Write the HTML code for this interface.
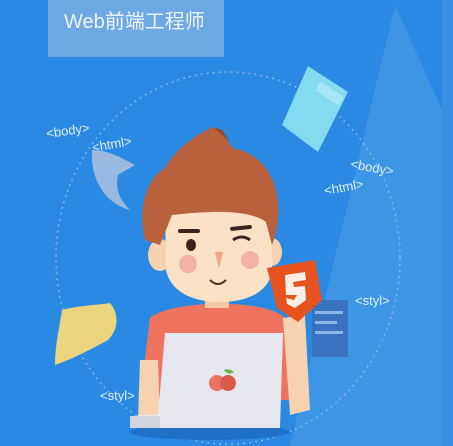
<!DOCTYPE html>
<html><head><meta charset="utf-8"><style>
html,body{margin:0;padding:0;background:#2a89e2;}
svg{display:block}
</style></head><body>
<svg width="453" height="446" viewBox="0 0 453 446" xmlns="http://www.w3.org/2000/svg">
<rect width="453" height="446" fill="#2a89e2"/>
<polygon points="395,5 442,110 442,446 290,446" fill="#3d95e6"/>
<rect x="442" y="0" width="11" height="446" fill="#3890e4"/>
<rect x="48" y="0" width="176" height="57" fill="#6ea8e2"/>
<text x="64" y="28" font-family="'Liberation Sans','Noto Sans CJK SC',sans-serif" font-size="20" fill="#eef5fb">Web前端工程师</text>
<ellipse cx="228" cy="258" rx="172" ry="186" fill="none" stroke="#7fb8ee" stroke-width="1.5" stroke-dasharray="2,4"/>
<polygon points="308,66 348,92 318,152 282,125" fill="#84dbef"/>
<rect x="305" y="85" width="28" height="10" fill="#a7e7f5" transform="rotate(33 318 110)"/>
<path d="M92,150 C110,150 125,160 135,165 L118,175 C115,190 120,200 130,210 C110,205 90,185 92,150Z" fill="#9ab9e0"/>
<g font-family="'Liberation Sans',sans-serif" font-size="13" fill="#dff0fb">
<text x="47" y="138" transform="rotate(-8 47 138)">&lt;body&gt;</text>
<text x="93" y="152" transform="rotate(-10 93 152)">&lt;html&gt;</text>
<text x="350" y="168" transform="rotate(10 350 168)">&lt;body&gt;</text>
<text x="325" y="195" transform="rotate(-10 325 195)">&lt;html&gt;</text>
<text x="355" y="305" >&lt;styl&gt;</text>
<text x="100" y="400">&lt;styl&gt;</text>
</g>
<path d="M62,310 C80,305 100,305 110,303 C120,315 118,330 108,340 C90,350 70,360 55,365 C55,345 60,325 62,310Z" fill="#ead47e"/>
<rect x="312" y="300" width="36" height="57" fill="#3a72c0"/>
<rect x="315" y="311" width="28" height="3" fill="#8cb6e6"/>
<rect x="315" y="321" width="22" height="3" fill="#8cb6e6"/>
<rect x="315" y="331" width="28" height="3" fill="#8cb6e6"/>
<ellipse cx="210" cy="432" rx="80" ry="8" fill="#2170c8"/>
<!-- shirt -->
<path d="M150,318 C170,300 265,298 285,318 L292,400 L140,400 Z" fill="#ef7460"/>
<path d="M140,360 L158,360 L160,420 L138,420 Z" fill="#f6d2b0"/>
<rect x="205" y="290" width="24" height="18" fill="#f3c8a4"/>
<path d="M283,318 L305,315 L310,410 L290,415 Z" fill="#f6d2b0"/>
<ellipse cx="160" cy="255" rx="12" ry="16" fill="#f6d2b0"/>
<ellipse cx="272" cy="252" rx="10" ry="14" fill="#f6d2b0"/>
<path d="M165,205 L272,200 L272,270 C270,290 250,302 220,302 C190,302 170,290 166,270 Z" fill="#fbe1c6"/>
<!-- hair -->
<path d="M145,240 C138,210 145,180 165,168 C175,150 195,135 213,127 C222,132 228,140 232,148 C255,152 272,168 277,195 C280,215 277,232 272,245 L266,222 C250,210 215,210 172,215 L160,245 Z" fill="#b9613d"/>
<path d="M213,127 L222,130 L230,142 Z" fill="#8f4a2e"/>
<rect x="178" y="229" width="22" height="4" rx="2" fill="#3b2420"/>
<rect x="230" y="226" width="22" height="4" rx="2" fill="#3b2420" transform="rotate(-6 240 228)"/>
<ellipse cx="191" cy="245" rx="5" ry="6" fill="#3b2420"/>
<path d="M233,240 Q242,234 250,240" stroke="#3b2420" stroke-width="3" fill="none"/>
<circle cx="188" cy="264" r="9" fill="#f2b3a6"/>
<circle cx="250" cy="260" r="9" fill="#f2b3a6"/>
<path d="M215,252 L219,268 L223,252 Z" fill="#f2a483"/>
<path d="M210,280 Q218,288 226,280" stroke="#5a3020" stroke-width="2" fill="none"/>
<path d="M267,268 L315,260 L322,300 L298,322 L277,308 Z" fill="#e6531f"/>
<path d="M285,275 L305,272 L306,280 L293,282 L294,287 L305,286 L306,300 L295,308 L287,304 L286,298 L294,300 L297,295 L286,295 Z" fill="#fbeee4"/>
<path d="M165,333 L283,333 L280,428 L133,428 L138,415 L158,415 Z" fill="#e7e8ef"/>
<rect x="130" y="416" width="30" height="12" fill="#d2d4de"/>
<circle cx="217" cy="383" r="8" fill="#ec7262"/>
<circle cx="228" cy="383" r="8" fill="#d9594b"/>
<path d="M224,370 Q230,368 234,372 Q228,376 224,370Z" fill="#6ab04c"/>
</svg>
</body></html>
